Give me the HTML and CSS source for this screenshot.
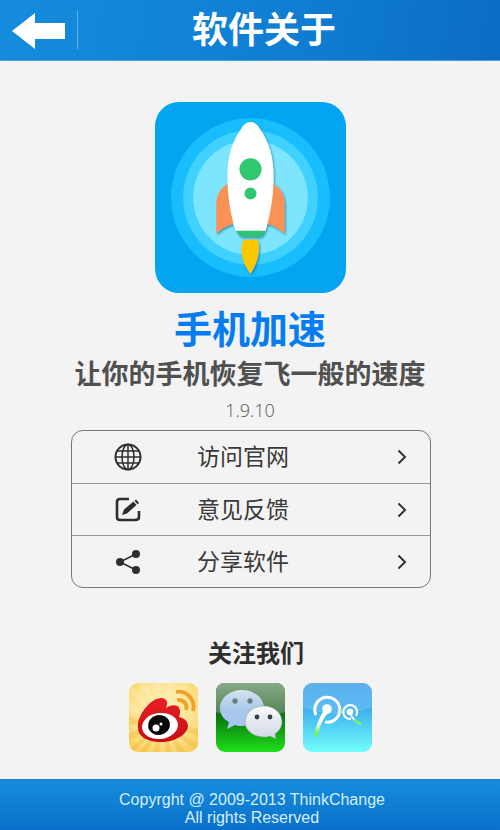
FILE: index.html
```html
<!DOCTYPE html>
<html lang="zh-CN">
<head>
    <meta charset="UTF-8">
    <meta name="viewport" content="width=device-width, initial-scale=1.0">
    <title>软件关于</title>
    <link rel="stylesheet" href="styles.css">
</head>
<body>
    <header class="header">
        <button type="button" class="backBtn" aria-label="返回">
            <svg width="54" height="38" viewBox="0 0 54 38">
                <path d="M0 20 L23 2 V12 H53 V28 H23 V38 Z" fill="#fff"/>
            </svg>
        </button>
        <h1 class="title">软件关于</h1>
    </header>

    <main class="content">
        <!-- App info -->
        <section class="appInfo">
            <svg class="appIcon" viewBox="0 0 190 190">
                <defs>
                    <filter id="shadow" x="-20%" y="-20%" width="150%" height="150%">
                        <feDropShadow dx="1" dy="1.5" stdDeviation="1" flood-color="#14506e" flood-opacity="0.6"/>
                    </filter>
                </defs>
                <rect width="190" height="190" rx="24" fill="#03a5f0"/>
                <circle cx="95" cy="95" r="79" fill="#18bdfe"/>
                <circle cx="95" cy="95" r="67" fill="#40d1fe"/>
                <circle cx="95" cy="95" r="57" fill="#7de6fe"/>
                <g filter="url(#shadow)">
                    <path d="M73 81 C64 86 61 93 61 103 V131 C66 126 71 123 79 121 Z" fill="#fa9155"/>
                    <path d="M117 81 C126 86 129 93 129 103 V131 C124 126 119 123 111 121 Z" fill="#fa9155"/>
                    <path d="M81 127 H109 C109 131 107 134 104 134 H88 C84 134 82 131 81 127 Z" fill="#2fc473"/>
                    <path d="M95 20 C99 20 102 23 104 26 C114 40 118 56 118 73 C118 93 115 111 110 128 H80 C75 111 72 93 72 73 C72 56 76 40 86 26 C88 23 91 20 95 20 Z" fill="#fff"/>
                    <path d="M87 140 Q87 137 90 137 H100 Q103 137 103 140 C105 152 100 163 95 171 C89 163 84 152 87 140 Z" fill="#fbc806"/>
                </g>
                <circle cx="95" cy="67" r="11" fill="#2fc86f"/>
                <circle cx="95" cy="91" r="6" fill="#2fc86f"/>
            </svg>
            <h2 class="appName">手机加速</h2>
            <p class="slogan">让你的手机恢复飞一般的速度</p>
            <p class="version">1.9.10</p>
        </section>

        <!-- Menu -->
        <nav class="menu">
            <a class="menuItem" href="#website">
                <svg class="menuIcon" viewBox="0 0 28 28" fill="none" stroke="#2e2e2e" stroke-width="1.5">
                    <circle cx="14" cy="14" r="12.500" stroke-width="2"/>
                    <ellipse cx="14" cy="14" rx="6" ry="12.500"/>
                    <path d="M14 1.500 V26.500 M1.500 14 H26.500 M3.500 8 H24.500 M3.500 20 H24.500"/>
                </svg>
                <span class="menuText">访问官网</span>
                <svg class="arrow" viewBox="0 0 10 16"><path d="M1.500 1.500 L8 8 L1.500 14.500"/></svg>
            </a>
            <a class="menuItem" href="#feedback">
                <svg class="menuIcon" viewBox="0 0 28 28">
                    <path d="M15 3 H6 Q3 3 3 6 V21 Q3 24 6 24 H21 Q25 24 25 21 V15" fill="none" stroke="#2e2e2e" stroke-width="2.600"/>
                    <path d="M8 19 L10 13.500 L19.500 5.500 L22.500 9 L13 17.500 Z M20.500 4.700 L22 3.500 L25 7 L23.500 8.200 Z" fill="#2e2e2e"/>
                </svg>
                <span class="menuText">意见反馈</span>
                <svg class="arrow" viewBox="0 0 10 16"><path d="M1.500 1.500 L8 8 L1.500 14.500"/></svg>
            </a>
            <a class="menuItem" href="#share">
                <svg class="menuIcon" viewBox="0 0 28 28" fill="#2e2e2e">
                    <path d="M22 6 L6 14 L22 22" fill="none" stroke="#2e2e2e" stroke-width="1.600"/>
                    <circle cx="6" cy="14" r="4"/>
                    <circle cx="22" cy="6" r="4"/>
                    <circle cx="22" cy="22" r="4"/>
                </svg>
                <span class="menuText">分享软件</span>
                <svg class="arrow" viewBox="0 0 10 16"><path d="M1.500 1.500 L8 8 L1.500 14.500"/></svg>
            </a>
        </nav>

        <!-- Social links -->
        <section class="follow">
            <h3 class="followTitle">关注我们</h3>
            <div class="socials">
                <a class="social" href="#weibo" aria-label="新浪微博">
                    <svg viewBox="0 0 69 69">
                        <defs>
                            <radialGradient id="weiboBg" cx="50%" cy="40%" r="70%">
                                <stop offset="0" stop-color="#fff3b4"/>
                                <stop offset="0.600" stop-color="#fde493"/>
                                <stop offset="1" stop-color="#f8cf5c"/>
                            </radialGradient>
                            <linearGradient id="weiboRed" x1="0" y1="0" x2="0" y2="1">
                                <stop offset="0" stop-color="#e81f25"/>
                                <stop offset="1" stop-color="#c80d16"/>
                            </linearGradient>
                            <clipPath id="weiboClip"><rect width="69" height="69" rx="9"/></clipPath>
                        </defs>
                        <g clip-path="url(#weiboClip)">
                            <rect width="69" height="69" fill="url(#weiboBg)"/>
                            <path d="M34 40 L-4 69 H4 Z M34 40 L11 69 H18 Z M34 40 L24 69 H30 Z M34 40 L37 69 H43 Z M34 40 L49 69 H57 Z M34 40 L69 69 V61 Z M34 40 L69 53 V46 Z M34 40 L0 58 V50 Z M34 40 L0 42 V34 Z" fill="#f2b42c" opacity="0.350"/>
                            <path d="M34 40 L0 26 V18 Z M34 40 L0 8 V0 Z M34 40 L10 0 H17 Z M34 40 L25 0 H31 Z M34 40 L39 0 H45 Z M34 40 L53 0 H60 Z" fill="#fff" opacity="0.150"/>
                        </g>
                        <path d="M9 45 C8 37 13 28 20 21 C26 15 34 13 37 17 C39 19 38 22 37 25 C43 21 49 22 50 25 C52 28 51 31 50 34 C55 35 59 38 59 43 C58 53 43 60 29 59 C17 58 9 53 9 45 Z" fill="url(#weiboRed)"/>
                        <ellipse cx="31" cy="43" rx="18" ry="13" fill="#fff" transform="rotate(-7 31 43)"/>
                        <ellipse cx="30" cy="42" rx="11" ry="10" fill="#090909" transform="rotate(-12 30 42)"/>
                        <circle cx="27" cy="45" r="3.500" fill="#fff"/>
                        <circle cx="32" cy="41" r="1.500" fill="#fff"/>
                        <path d="M47 9 C58 7 67 17 64 28 M48 17 C54 16 59 21 57 27" fill="none" stroke="#f0a12a" stroke-width="3.800"/>
                    </svg>
                </a>
                <a class="social" href="#wechat" aria-label="微信">
                    <svg viewBox="0 0 69 69">
                        <defs>
                            <linearGradient id="wechatBg" x1="0" y1="0" x2="0" y2="1">
                                <stop offset="0" stop-color="#176d19"/>
                                <stop offset="0.500" stop-color="#09790d"/>
                                <stop offset="1" stop-color="#1fe01b"/>
                            </linearGradient>
                            <linearGradient id="wechatGloss" x1="0" y1="0" x2="0" y2="1">
                                <stop offset="0" stop-color="#88a987"/>
                                <stop offset="1" stop-color="#4c8050"/>
                            </linearGradient>
                            <linearGradient id="bubbleBlue" x1="0" y1="0" x2="0" y2="1">
                                <stop offset="0" stop-color="#d4e3f2"/>
                                <stop offset="0.500" stop-color="#a9c8e8"/>
                                <stop offset="1" stop-color="#a9c4fa"/>
                            </linearGradient>
                            <linearGradient id="bubbleWhite" x1="0" y1="0" x2="0" y2="1">
                                <stop offset="0" stop-color="#fafbfb"/>
                                <stop offset="0.500" stop-color="#e3e7ef"/>
                                <stop offset="1" stop-color="#d2d8e9"/>
                            </linearGradient>
                        </defs>
                        <rect width="69" height="69" rx="9" fill="url(#wechatBg)"/>
                        <path d="M0 29 V9 Q0 0 9 0 H60 Q69 0 69 9 V29 Q35 40 0 29 Z" fill="url(#wechatGloss)"/>
                        <path d="M26 7 C38 7 48 15 48 25 C48 35 38 43 26 43 C24 43 21 43 19 42 L11 46 L13 39 C7 36 4 31 4 25 C4 15 14 7 26 7 Z" fill="url(#bubbleBlue)"/>
                        <circle cx="19" cy="18" r="2.500" fill="#66747b" stroke="#8b9ca5"/>
                        <circle cx="34" cy="18" r="2.500" fill="#66747b" stroke="#8b9ca5"/>
                        <path d="M48 23 C58 23 66 30 66 39 C66 44 63 48 59 51 L60 56 L54 53 C52 54 50 54 48 54 C37 54 29 47 29 39 C29 30 37 23 48 23 Z" fill="url(#bubbleWhite)" stroke="#8aa68b" stroke-width="0.600"/>
                        <circle cx="41" cy="34" r="2.400" fill="#37404a"/>
                        <circle cx="54" cy="34" r="2.400" fill="#37404a"/>
                    </svg>
                </a>
                <a class="social" href="#tqq" aria-label="腾讯微博">
                    <svg viewBox="0 0 69 69">
                        <defs>
                            <linearGradient id="tqqBg" x1="0" y1="0" x2="0" y2="1">
                                <stop offset="0" stop-color="#43a3ea"/>
                                <stop offset="0.400" stop-color="#41b2f0"/>
                                <stop offset="1" stop-color="#70fffb"/>
                            </linearGradient>
                            <linearGradient id="stemLeft" x1="0" y1="0" x2="0" y2="1">
                                <stop offset="0.500" stop-color="#fff"/>
                                <stop offset="0.850" stop-color="#72f064"/>
                            </linearGradient>
                        </defs>
                        <rect width="69" height="69" rx="9" fill="url(#tqqBg)"/>
                        <path d="M0 24 V9 Q0 0 9 0 H60 Q69 0 69 9 V24 Q35 38 0 24 Z" fill="#fff" opacity="0.140"/>
                        <g fill="none" stroke="#fff" stroke-width="3">
                            <path d="M13 32 A12.500 12.500 0 1 1 22 39"/>
                            <path d="M48 36 A7 7 0 1 1 53 33" stroke-width="2"/>
                        </g>
                        <path d="M22 26 C16 34 13 43 11 53 L15 54 C16 44 20 35 26 29 Z" fill="url(#stemLeft)"/>
                        <path d="M47 30 C49 35 52 39 58 41" fill="none" stroke="#fff" stroke-width="2"/>
                        <path d="M51 37 L58 41" fill="none" stroke="#72f064" stroke-width="2.500"/>
                        <path d="M38 26 V31" stroke="#8df08a" stroke-width="1.500"/>
                        <circle cx="24" cy="26" r="4.800" fill="#fff"/>
                        <circle cx="47" cy="29" r="3.300" fill="#fff"/>
                    </svg>
                </a>
            </div>
        </section>
    </main>

    <footer class="footer">
        <p>Copyrght @ 2009-2013 ThinkChange</p>
        <p>All rights Reserved</p>
    </footer>
</body>
</html>
```

FILE: styles.css
```css
* {
    margin: 0;
    padding: 0;
    box-sizing: border-box;
}

body {
    display: flex;
    flex-direction: column;
    min-height: 100vh;
    font-family: "Liberation Sans", "Noto Sans CJK SC", sans-serif;
    background-color: #f3f3f3;
    color: #3a3a3a;
}

a {
    color: inherit;
    text-decoration: none;
}

svg {
    display: block;
}

/* Header */
.header {
    display: grid;
    grid-template-columns: 78px 1fr 50px;
    align-items: center;
    height: 61px;
    background: linear-gradient(100deg, #158cdc, #0f7dd2 60%, #0b6cc6);
    border-bottom: 1px solid #4a9fd8;
}

.backBtn {
    height: 38px;
    padding-left: 12px;
    background: none;
    border: none;
    border-right: 1px solid #62b3e8;
    cursor: pointer;
}

.title {
    padding-top: 2px;
    font-size: 36px;
    line-height: 58px;
    text-align: center;
    color: #fff;
}

/* Content */
.content {
    flex: 1;
    display: flex;
    flex-direction: column;
    align-items: center;
}

.appInfo {
    padding-top: 41px;
    text-align: center;
}

.appIcon {
    width: 191px;
    height: 191px;
    margin: 0 auto;
}

.appName {
    margin-top: 12px;
    font-size: 38px;
    line-height: 50px;
    color: #057df0;
}

.slogan {
    font-size: 27px;
    font-weight: bold;
    line-height: 40px;
    color: #505050;
}

.version {
    font-family: "Open Sans", sans-serif;
    font-size: 18px;
    font-weight: 300;
    line-height: 30px;
    color: #555;
}

/* Menu */
.menu {
    width: 72%;
    min-width: 300px;
    margin-top: 5px;
    margin-left: 2px;
    border: 1px solid #777;
    border-radius: 12px;
}

.menuItem {
    display: flex;
    align-items: center;
    height: 52px;
    padding: 0 23px 0 42px;
}

.menuItem + .menuItem {
    border-top: 1px solid #999;
}

.menuIcon {
    width: 28px;
    height: 28px;
}

.menuText {
    flex: 1;
    margin-left: 55px;
    font-size: 23px;
    line-height: 32px;
}

.arrow {
    width: 10px;
    height: 16px;
    fill: none;
    stroke: #333;
    stroke-width: 2;
}

/* Follow us */
.follow {
    margin-top: 48px;
}

.followTitle {
    padding-left: 12px;
    font-size: 24px;
    line-height: 36px;
    text-align: center;
    color: #2e2e2e;
}

.socials {
    display: flex;
    gap: 18px;
    margin-top: 11px;
}

.social {
    width: 69px;
    height: 69px;
}

/* Footer */
.footer {
    padding: 11px 0 3px 4px;
    background: linear-gradient(#158cdc, #0b70ca);
    border-top: 1px solid #2079b8;
    font-size: 16px;
    line-height: 18px;
    text-align: center;
    color: #d5effa;
}
```
